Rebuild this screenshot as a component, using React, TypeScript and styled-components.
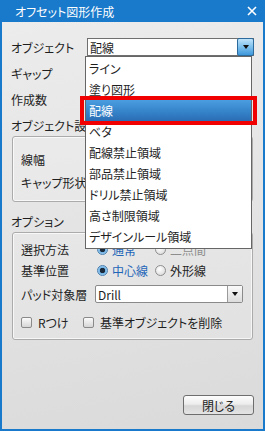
import React from "react";
import styled, { createGlobalStyle, css } from "styled-components";

const Global = createGlobalStyle`
  html, body { margin: 0; padding: 0; }
  body {
    font-family: "Noto Sans CJK JP", "Noto Sans", sans-serif;
    font-size: 12px;
    color: #1e1e1e;
  }
`;

const Window = styled.div`
  width: 265px;
  height: 431px;
  box-sizing: border-box;
  background: #1979ca;
  padding: 0 2px 2px 2px;
  display: flex;
  flex-direction: column;
`;

const TitleBar = styled.div`
  height: 22px;
  display: flex;
  align-items: center;
  justify-content: space-between;
  padding: 0 6px 0 13px;
  color: #fff;
  font-size: 12px;
  font-feature-settings: "palt";
`;

const Body = styled.div`
  flex: 1;
  display: flex;
  flex-direction: column;
  padding: 16px 9px 14px 9px;
  background: linear-gradient(170deg, #ececec 0%, #e2e2e2 60%, #dadada 100%);
  font-feature-settings: "palt";
`;

const Row = styled.div<{ $top?: number }>`
  display: flex;
  align-items: center;
  height: 18px;
  margin-top: ${(p) => p.$top ?? 0}px;
`;

const Label = styled.div<{ $w?: number }>`
  width: ${(p) => p.$w ?? 76}px;
  flex: none;
  white-space: nowrap;
  overflow: hidden;
`;

const ComboWrap = styled.div`
  position: relative;
`;

const Combo = styled.div<{ $w: number; $open?: boolean }>`
  width: ${(p) => p.$w}px;
  height: 18px;
  box-sizing: border-box;
  background: #fff;
  border: 1px solid ${(p) => (p.$open ? "#6f6f6f" : "#8a8a8a")};
  border-radius: ${(p) => (p.$open ? 0 : 2)}px;
  display: flex;
  align-items: center;
  padding-left: 2px;
  font-size: 12px;
  font-family: "Noto Sans CJK JP", "Liberation Sans", sans-serif;
`;

const ComboText = styled.span`
  flex: 1;
`;

const DropButton = styled.span<{ $active?: boolean }>`
  width: 15px;
  height: 16px;
  display: flex;
  align-items: center;
  justify-content: center;
  box-sizing: border-box;
  border-left: 1px solid #9a9a9a;
  background: linear-gradient(#fafafa, #dcdcdc);
  ${(p) =>
    p.$active &&
    css`
      height: 18px;
      margin: -1px -1px -1px 0;
      width: 17px;
      border: 1px solid #2c6a9c;
      border-radius: 2px;
      background: linear-gradient(#bfe3fa 0%, #7cc0ee 50%, #3e98db 100%);
    `}
`;

const Arrow = styled.span`
  width: 0;
  height: 0;
  border-left: 3.5px solid transparent;
  border-right: 3.5px solid transparent;
  border-top: 4px solid #111;
`;

const TextBox = styled.div`
  width: 150px;
  height: 18px;
  box-sizing: border-box;
  background: #fff;
  border: 1px solid #a0a0a0;
`;

const DropList = styled.div`
  position: absolute;
  top: 18px;
  left: -2px;
  width: 167px;
  box-sizing: border-box;
  background: #fff;
  border: 1px solid #666;
  padding: 1px 0 1px 0;
  z-index: 5;
`;

const Item = styled.div<{ $selected?: boolean }>`
  position: relative;
  height: 21px;
  line-height: 21px;
  padding-left: 3px;
  white-space: nowrap;
  ${(p) =>
    p.$selected &&
    css`
      color: #fff;
      background: linear-gradient(#4a9ee0 0%, #3786cc 50%, #2a6db4 100%);
      &::after {
        content: "";
        position: absolute;
        top: -4px;
        bottom: -4px;
        left: -6px;
        right: -6px;
        border: 4px solid #f00000;
      }
    `}
`;

const GroupTitle = styled.div<{ $top: number }>`
  height: 16px;
  line-height: 16px;
  margin-top: ${(p) => p.$top}px;
  white-space: nowrap;
`;

const GroupBox = styled.div<{ $pt: number; $pb: number }>`
  margin: 2px 1px 0 1px;
  border: 1px solid #ababab;
  border-radius: 3px;
  box-shadow: inset 0 0 0 1px rgba(255, 255, 255, 0.7);
  background: rgba(255, 255, 255, 0.12);
  padding: ${(p) => p.$pt}px 8px ${(p) => p.$pb}px 8px;
`;

const Options = styled.div`
  display: flex;
  margin-left: 2px;
`;

const Option = styled.label<{ $w?: number; $state?: "on" | "off" | "disabled" }>`
  display: flex;
  align-items: center;
  gap: 4px;
  width: ${(p) => p.$w ?? 58}px;
  color: ${(p) =>
    p.$state === "on" ? "#1f66b8" : p.$state === "disabled" ? "#8d8d8d" : "#1e1e1e"};
`;

const Radio = styled.span<{ $on?: boolean }>`
  width: 11px;
  height: 11px;
  box-sizing: border-box;
  border-radius: 50%;
  border: 1px solid #8e8e8e;
  background: radial-gradient(circle at 40% 35%, #ffffff, #d4d4d4);
  display: flex;
  align-items: center;
  justify-content: center;
  ${(p) =>
    p.$on &&
    css`
      border-color: #4a7fae;
      background: radial-gradient(circle, #1a2a3a 0 2.5px, #6fb2e6 3px, #cfe7f8 100%);
    `}
`;

const CheckRow = styled.div`
  display: flex;
  align-items: center;
  height: 16px;
  margin-top: 11px;
`;

const Check = styled.label<{ $w?: number }>`
  display: flex;
  align-items: center;
  gap: 6px;
  width: ${(p) => (p.$w ? `${p.$w}px` : "auto")};
  white-space: nowrap;
`;

const Box = styled.span`
  width: 11px;
  height: 11px;
  box-sizing: border-box;
  border: 1px solid #8a8a8a;
  border-radius: 2px;
  background: linear-gradient(#fbfbfb, #d6d6d6);
`;

const Spacer = styled.div`
  flex: 1;
`;

const Footer = styled.div`
  display: flex;
  justify-content: flex-end;
`;

const Button = styled.button`
  width: 71px;
  height: 20px;
  box-sizing: border-box;
  margin-right: 0;
  border: 1px solid #6e6e6e;
  border-radius: 3px;
  background: linear-gradient(#fdfdfd 0%, #ededed 45%, #d6d6d6 55%, #e4e4e4 100%);
  font-family: "Noto Sans CJK JP", sans-serif;
  font-size: 12px;
  font-feature-settings: "palt";
  color: #1e1e1e;
  padding: 0;
`;

const items = [
  "ライン",
  "塗り図形",
  "配線",
  "ベタ",
  "配線禁止領域",
  "部品禁止領域",
  "ドリル禁止領域",
  "高さ制限領域",
  "デザインルール領域",
];

export default function App() {
  return (
    <>
      <Global />
      <Window>
        <TitleBar>
          <span>オフセット図形作成</span>
          <svg width="10" height="10" viewBox="0 0 10 10">
            <path d="M1 1 L9 9 M9 1 L1 9" stroke="#fff" strokeWidth="1.6" />
          </svg>
        </TitleBar>
        <Body>
          <Row>
            <Label>オブジェクト</Label>
            <ComboWrap>
              <Combo $w={167} $open>
                <ComboText>配線</ComboText>
                <DropButton $active>
                  <Arrow />
                </DropButton>
              </Combo>
              <DropList>
                {items.map((t) => (
                  <Item key={t} $selected={t === "配線"}>
                    {t}
                  </Item>
                ))}
              </DropList>
            </ComboWrap>
          </Row>
          <Row $top={8}>
            <Label>ギャップ</Label>
            <TextBox />
          </Row>
          <Row $top={8}>
            <Label>作成数</Label>
            <TextBox />
          </Row>

          <GroupTitle $top={10}>オブジェクト設定</GroupTitle>
          <GroupBox $pt={13} $pb={10}>
            <Row>
              <Label $w={66}>線幅</Label>
            </Row>
            <Row $top={5}>
              <Label $w={74}>キャップ形状</Label>
            </Row>
          </GroupBox>

          <GroupTitle $top={12}>オプション</GroupTitle>
          <GroupBox $pt={7} $pb={9}>
            <Row>
              <Label $w={74}>選択方法</Label>
              <Options>
                <Option $state="on">
                  <Radio $on />
                  通常
                </Option>
                <Option $state="disabled">
                  <Radio />
                  二点間
                </Option>
              </Options>
            </Row>
            <Row $top={3}>
              <Label $w={74}>基準位置</Label>
              <Options>
                <Option $state="on">
                  <Radio $on />
                  中心線
                </Option>
                <Option>
                  <Radio />
                  外形線
                </Option>
              </Options>
            </Row>
            <Row $top={6}>
              <Label $w={74}>パッド対象層</Label>
              <Combo $w={148}>
                <ComboText>Drill</ComboText>
                <DropButton>
                  <Arrow />
                </DropButton>
              </Combo>
            </Row>
            <CheckRow>
              <Check $w={62}>
                <Box />
                Rつけ
              </Check>
              <Check>
                <Box />
                基準オブジェクトを削除
              </Check>
            </CheckRow>
          </GroupBox>

          <Spacer />
          <Footer>
            <Button>閉じる</Button>
          </Footer>
        </Body>
      </Window>
    </>
  );
}
